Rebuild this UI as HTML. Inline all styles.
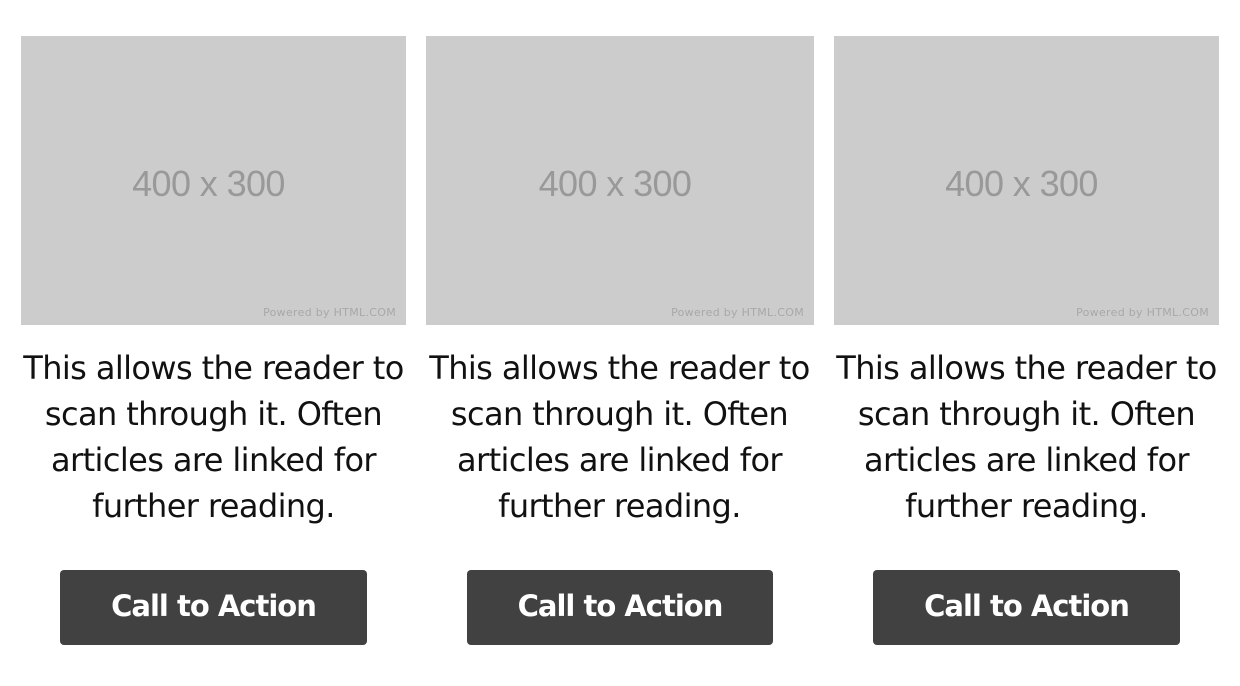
<!DOCTYPE html>
<html><head><style>
body{margin:0;background:#fff;width:1240px;height:686px;position:relative;font-family:"DejaVu Sans","Liberation Sans",sans-serif;overflow:hidden}
.img{position:absolute;top:36px;height:289px;background:#ccc}
.img .t{position:absolute;left:-10px;right:0;top:148px;transform:translateY(-50%);text-align:center;font-family:"Liberation Sans",sans-serif;font-size:36px;color:#999;letter-spacing:-0.6px}
.img .p{position:absolute;right:10px;bottom:6px;font-size:11px;color:#a8a8a8;letter-spacing:0.3px}
.txt{position:absolute;top:345px;text-align:center;font-size:32px;line-height:46px;color:#111;letter-spacing:-0.6px}
.btn{position:absolute;top:570px;height:75px;background:#414141;border-radius:4px;color:#fff;font-weight:bold;font-size:29px;line-height:73px;text-align:center;letter-spacing:-1px}
</style></head><body>
<div class="img" style="left:21px;width:385px"><div class="t">400 x 300</div><div class="p">Powered by HTML.COM</div></div>
<div class="img" style="left:426px;width:388px"><div class="t">400 x 300</div><div class="p">Powered by HTML.COM</div></div>
<div class="img" style="left:834px;width:385px"><div class="t">400 x 300</div><div class="p">Powered by HTML.COM</div></div>
<div class="txt" style="left:0px;width:427px">This allows the reader to<br>scan through it. Often<br>articles are linked for<br>further reading.</div>
<div class="txt" style="left:406px;width:427px">This allows the reader to<br>scan through it. Often<br>articles are linked for<br>further reading.</div>
<div class="txt" style="left:813px;width:427px">This allows the reader to<br>scan through it. Often<br>articles are linked for<br>further reading.</div>
<div class="btn" style="left:60px;width:307px">Call to Action</div>
<div class="btn" style="left:467px;width:306px">Call to Action</div>
<div class="btn" style="left:873px;width:307px">Call to Action</div>
</body></html>
